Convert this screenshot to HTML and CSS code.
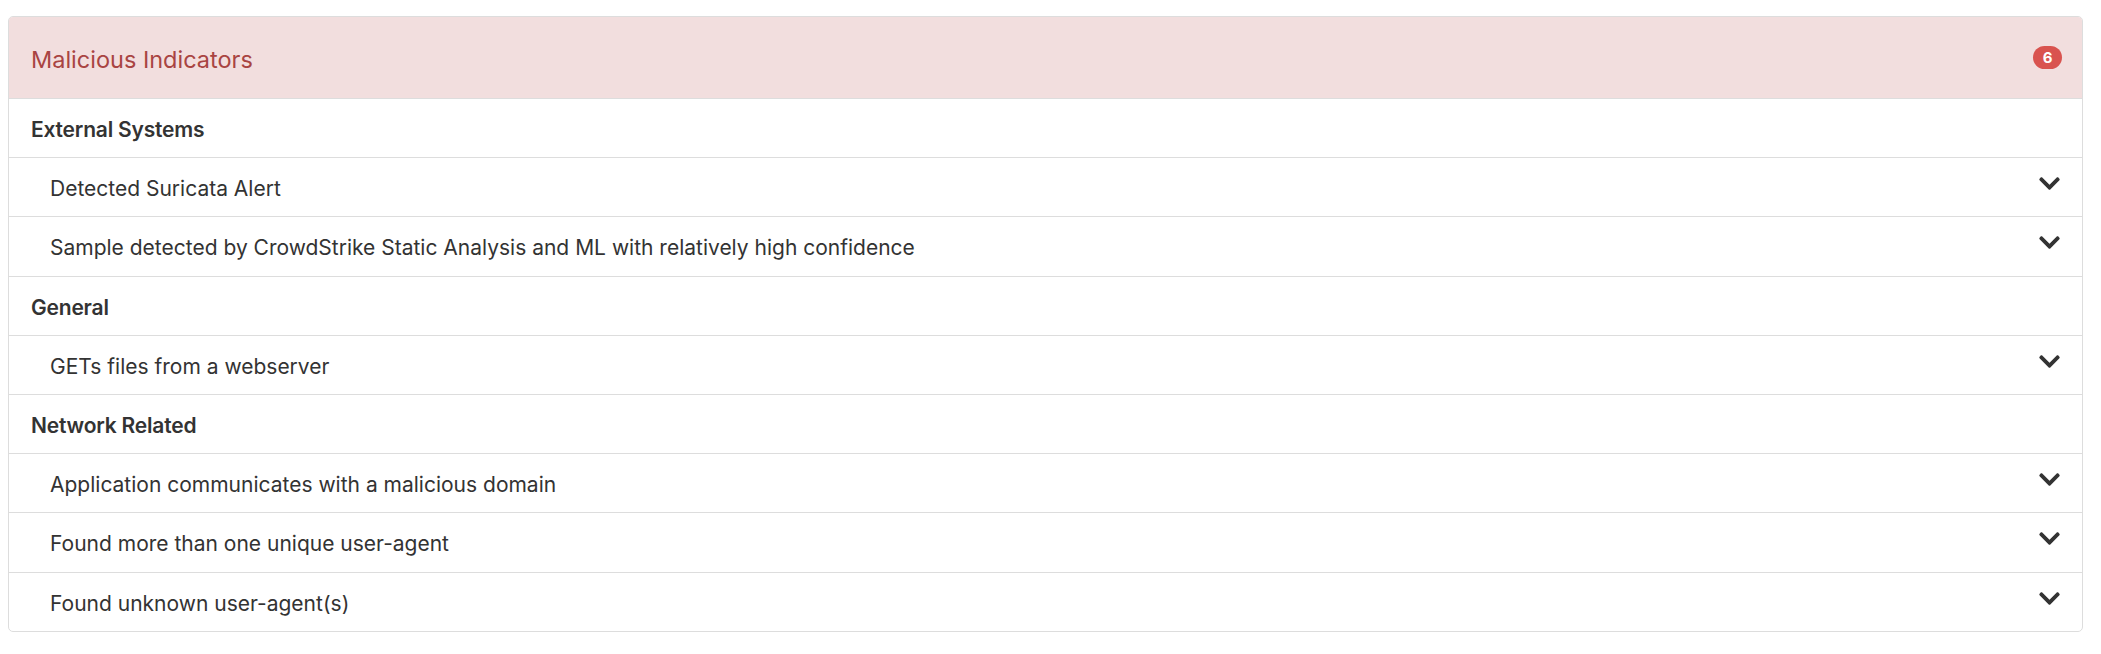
FILE: index.html
```html
<!DOCTYPE html>
<html>
<head>
<meta charset="utf-8">
<link rel="stylesheet" href="styles.css">
</head>
<body>
<div class="panel">
  <div class="panel-heading">
    <span class="panel-title">Malicious Indicators</span>
    <span class="badge">6</span>
  </div>
  <ul class="list">
    <li class="group">External Systems</li>
    <li class="item"><span>Detected Suricata Alert</span><svg class="chev" viewBox="0 120 448 272"><path d="M207.029 381.476L12.686 187.132c-9.373-9.373-9.373-24.569 0-33.941l22.667-22.667c9.357-9.357 24.522-9.375 33.901-.04L224 284.505l154.745-154.021c9.379-9.335 24.544-9.317 33.901.04l22.667 22.667c9.373 9.373 9.373 24.569 0 33.941L240.971 381.476c-9.373 9.372-24.569 9.372-33.942 0z"/></svg></li>
    <li class="item"><span>Sample detected by CrowdStrike Static Analysis and ML with relatively high confidence</span><svg class="chev" viewBox="0 120 448 272"><path d="M207.029 381.476L12.686 187.132c-9.373-9.373-9.373-24.569 0-33.941l22.667-22.667c9.357-9.357 24.522-9.375 33.901-.04L224 284.505l154.745-154.021c9.379-9.335 24.544-9.317 33.901.04l22.667 22.667c9.373 9.373 9.373 24.569 0 33.941L240.971 381.476c-9.373 9.372-24.569 9.372-33.942 0z"/></svg></li>
    <li class="group">General</li>
    <li class="item"><span>GETs files from a webserver</span><svg class="chev" viewBox="0 120 448 272"><path d="M207.029 381.476L12.686 187.132c-9.373-9.373-9.373-24.569 0-33.941l22.667-22.667c9.357-9.357 24.522-9.375 33.901-.04L224 284.505l154.745-154.021c9.379-9.335 24.544-9.317 33.901.04l22.667 22.667c9.373 9.373 9.373 24.569 0 33.941L240.971 381.476c-9.373 9.372-24.569 9.372-33.942 0z"/></svg></li>
    <li class="group">Network Related</li>
    <li class="item"><span>Application communicates with a malicious domain</span><svg class="chev" viewBox="0 120 448 272"><path d="M207.029 381.476L12.686 187.132c-9.373-9.373-9.373-24.569 0-33.941l22.667-22.667c9.357-9.357 24.522-9.375 33.901-.04L224 284.505l154.745-154.021c9.379-9.335 24.544-9.317 33.901.04l22.667 22.667c9.373 9.373 9.373 24.569 0 33.941L240.971 381.476c-9.373 9.372-24.569 9.372-33.942 0z"/></svg></li>
    <li class="item"><span>Found more than one unique user-agent</span><svg class="chev" viewBox="0 120 448 272"><path d="M207.029 381.476L12.686 187.132c-9.373-9.373-9.373-24.569 0-33.941l22.667-22.667c9.357-9.357 24.522-9.375 33.901-.04L224 284.505l154.745-154.021c9.379-9.335 24.544-9.317 33.901.04l22.667 22.667c9.373 9.373 9.373 24.569 0 33.941L240.971 381.476c-9.373 9.372-24.569 9.372-33.942 0z"/></svg></li>
    <li class="item"><span>Found unknown user-agent(s)</span><svg class="chev" viewBox="0 120 448 272"><path d="M207.029 381.476L12.686 187.132c-9.373-9.373-9.373-24.569 0-33.941l22.667-22.667c9.357-9.357 24.522-9.375 33.901-.04L224 284.505l154.745-154.021c9.379-9.335 24.544-9.317 33.901.04l22.667 22.667c9.373 9.373 9.373 24.569 0 33.941L240.971 381.476c-9.373 9.372-24.569 9.372-33.942 0z"/></svg></li>
  </ul>
</div>
</body>
</html>
```

FILE: styles.css
```css
html, body {
  margin: 0;
  padding: 0;
  background: #fff;
}
body {
  padding: 16px 18px 0 8px;
  font-family: Inter, "Liberation Sans", sans-serif;
  color: #333;
}
.panel {
  border: 1px solid #ddd;
  border-radius: 5px;
  overflow: hidden;
  background: #fff;
}
.panel-heading {
  background: #f2dede;
  color: #a94442;
  box-sizing: border-box;
  height: 82px;
  border-bottom: 1px solid #ddd;
  display: flex;
  align-items: center;
  justify-content: space-between;
  padding: 4px 20px 0 22px;
}
.panel-title {
  font-size: 23.5px;
  font-weight: 400;
}
.badge {
  background: #d9534f;
  color: #fff;
  font-size: 15px;
  font-weight: 700;
  min-width: 29px;
  height: 23px;
  line-height: 23px;
  border-radius: 12px;
  text-align: center;
  margin-top: -4px;
}
.list {
  list-style: none;
  margin: 0;
  padding: 0;
}
.list li {
  font-size: 21px;
  line-height: 28.2px;
  padding: 17px 0 13px;
  border-bottom: 1px solid #ddd;
}
.list li:last-child {
  border-bottom: none;
}
.group {
  font-weight: 600;
  letter-spacing: -0.2px;
  padding-left: 22px !important;
}
.item {
  display: flex;
  justify-content: space-between;
  align-items: flex-start;
  padding-left: 41px !important;
  padding-right: 22px !important;
}
.chev {
  width: 21px;
  height: 13px;
  fill: #333;
  margin-top: 2px;
}
```
